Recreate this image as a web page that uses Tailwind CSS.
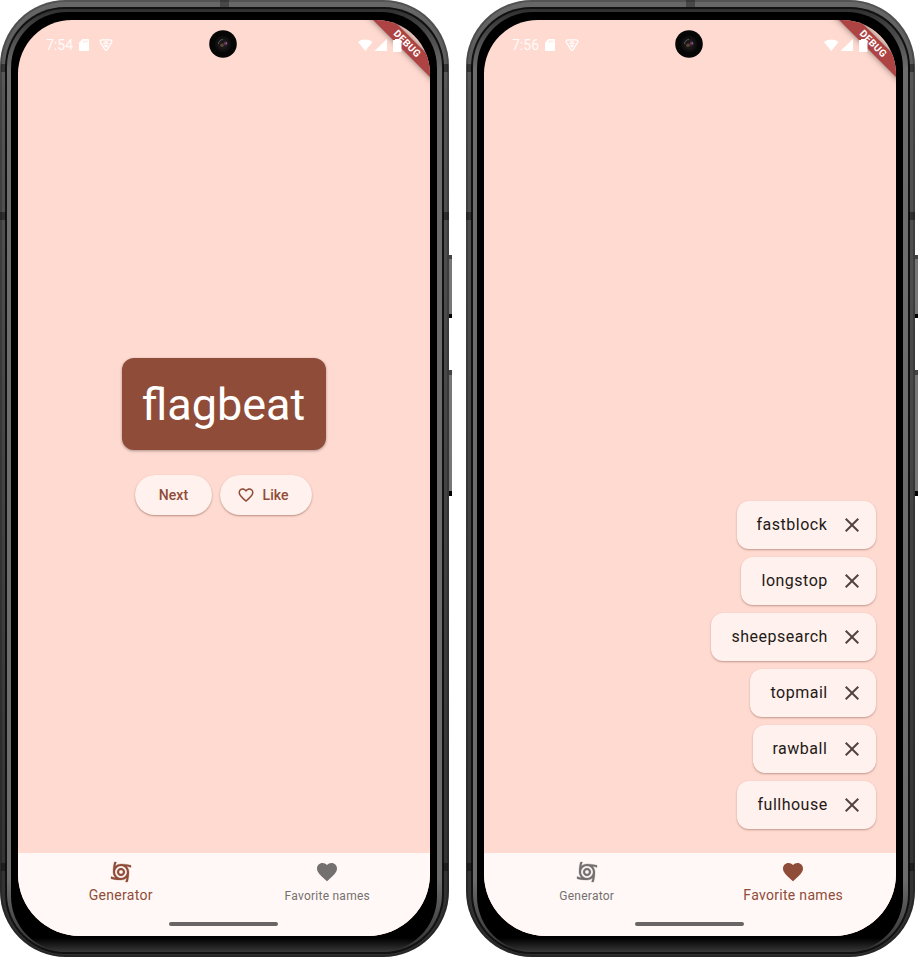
<!DOCTYPE html>
<html lang="en">
<head>
<meta charset="utf-8">
<title>Namer app</title>
<script src="https://cdn.jsdelivr.net/npm/@tailwindcss/browser@4"></script>
</head>
<body class="w-[918px] h-[957px] overflow-hidden bg-white font-['Roboto',sans-serif]">
<svg class="hidden">
  <symbol id="close" viewBox="0 0 24 24"><path fill="currentColor" d="M19 6.4 17.6 5 12 10.6 6.4 5 5 6.4 10.6 12 5 17.6 6.4 19 12 13.4 17.6 19 19 17.6 13.4 12z"/></symbol>
  <symbol id="heart" viewBox="0 0 24 24"><path fill="currentColor" d="M12 21.35l-1.45-1.32C5.4 15.36 2 12.28 2 8.5 2 5.42 4.42 3 7.5 3c1.74 0 3.41.81 4.5 2.09C13.09 3.81 14.76 3 16.5 3 19.58 3 22 5.42 22 8.5c0 3.78-3.4 6.86-8.55 11.54L12 21.35z"/></symbol>
  <symbol id="heart-o" viewBox="0 0 24 24"><path fill="currentColor" d="M16.5 3c-1.74 0-3.41.81-4.5 2.09C10.91 3.81 9.24 3 7.5 3 4.42 3 2 5.42 2 8.5c0 3.78 3.4 6.86 8.55 11.54L12 21.35l1.45-1.32C18.6 15.36 22 12.28 22 8.5 22 5.42 19.58 3 16.5 3zm-4.4 15.55l-.1.1-.1-.1C7.14 14.24 4 11.39 4 8.5 4 6.5 5.5 5 7.5 5c1.54 0 3.04.99 3.57 2.36h1.87C13.46 5.99 14.96 5 16.5 5c2 0 3.5 1.5 3.5 3.5 0 2.89-3.14 5.74-7.9 10.05z"/></symbol>
  <symbol id="cyclone" viewBox="0 0 24 24"><g fill="currentColor" stroke="currentColor" stroke-width=".3"><path d="M12 8c-2.21 0-4 1.79-4 4s1.79 4 4 4 4-1.79 4-4-1.79-4-4-4zm0 6c-1.1 0-2-.9-2-2s.9-2 2-2 2 .9 2 2-.9 2-2 2z"/><path d="M22 7.47V5.35C20.05 4.77 16.56 4 12 4c-2.15 0-4.11.86-5.54 2.24.13-.85.4-2.4 1.01-4.24H5.35C4.77 3.95 4 7.44 4 12c0 2.15.86 4.11 2.24 5.54-.85-.14-2.4-.4-4.24-1.01v2.12C3.95 19.23 7.44 20 12 20c2.15 0 4.11-.86 5.54-2.24-.14.85-.4 2.4-1.01 4.24h2.12c.58-1.95 1.35-5.44 1.35-10 0-2.15-.86-4.11-2.24-5.54.85.13 2.4.4 4.24 1.01zM12 18c-3.31 0-6-2.69-6-6s2.69-6 6-6 6 2.69 6 6-2.69 6-6 6z"/></g></symbol>
  <symbol id="sd" viewBox="0 0 10 12"><path fill="currentColor" d="M3.5 0H9a1 1 0 0 1 1 1v10a1 1 0 0 1-1 1H1a1 1 0 0 1-1-1V3.500z"/><path stroke="#ffdad1" stroke-width=".8" d="M4.400 1.500v2M6.200 1.500v2M8 1.500v2"/></symbol>
  <symbol id="shield" viewBox="0 0 14 12"><path fill="none" stroke="currentColor" stroke-width="1.300" stroke-linejoin="round" d="M3 .8h8c1.600 0 2.300 1.200 1.600 2.500L8 10.600c-.6.9-1.400.9-2 0L1.400 3.300C.7 2 1.400.8 3 .8z"/><path fill="currentColor" d="M5.600 2.300h2.800l.5 1.500H5.100zM4 4.300h6v.8H4zM5 5.800h4l-.6 1.500L7 8.800 5.600 7.300z"/></symbol>
  <symbol id="signals" viewBox="0 0 45 13"><path fill="currentColor" d="M0 3C4-.3 10.500-.3 14.500 3L7.300 12zM29 0v12H16.500zM37 1V0h4v1h1.500c.6 0 1 .4 1 1v10c0 .6-.4 1-1 1h-6.500c-.6 0-1-.4-1-1V2c0-.6.4-1 1-1z"/></symbol>
  <symbol id="camera" viewBox="0 0 28 28"><circle cx="14" cy="14" r="13.800" fill="#060606"/><circle cx="14" cy="14" r="8" fill="#101010"/><circle cx="14" cy="14" r="5.500" fill="#1c1719"/><path d="M9.500 14a4.500 4.500 0 0 1 4.500-4.500" fill="none" stroke="#5a5a5a" stroke-width="1"/><circle cx="13" cy="15.200" r="1.800" fill="#5a4632"/><circle cx="16.500" cy="13.500" r="1.900" fill="#54304e"/><circle cx="17.300" cy="13" r=".6" fill="#d59cc9"/></symbol>
</svg>

<main class="flex w-[932px] gap-[17px]">
  <!-- Generator page -->
  <section class="relative w-[449px] h-[957px] shrink-0">
    <div class="h-full rounded-[66px] bg-linear-to-b from-[#686868] via-[#545454] via-10% to-[#303030] pt-[7px] px-[5px] pb-[3px] shadow-[inset_0_0_0_2px_rgba(0,0,0,.2)]">
      <div class="h-full rounded-[60px] bg-[#111] p-[2px]">
        <div class="h-full rounded-[58px] bg-[linear-gradient(to_bottom,#303030,#6c6c6c_60px,#6c6c6c_870px,#303030)] pt-[3px] pl-[4px] pr-[5px]">
          <div class="h-full rounded-[56px] bg-[linear-gradient(to_bottom,#000_0_926px,#383838)] pt-[8px] px-[7px]">
            <div class="relative flex flex-col w-[412px] h-[916px] rounded-[54px_54px_62px_62px] overflow-hidden bg-[#ffdad1]">
              <header class="flex items-center h-[50px] pl-[28px] pr-[27px] text-white">
                <span class="text-[14px] leading-none opacity-90">7:54</span>
                <svg class="w-[10px] h-[12px] ml-[6px]"><use href="#sd"/></svg>
                <svg class="w-[14px] h-[12px] ml-[10px]"><use href="#shield"/></svg>
                <svg class="relative z-10 w-[45px] h-[13px] ml-auto"><use href="#signals"/></svg>
              </header>
              <div class="flex-1 flex flex-col items-center pt-[288px] pr-px">
                <h1 class="w-[204px] h-[92px] rounded-[12px] bg-[#8f4c38] text-white text-[45px] leading-[93px] text-center shadow-[0_1px_3px_rgba(0,0,0,.35)]">flagbeat</h1>
                <div class="flex gap-[8px] mt-[25px] text-[#8f4c38] text-[14px] font-medium tracking-[.1px]">
                  <div class="flex items-center justify-center w-[77px] h-[40px] rounded-full bg-[#fff1ed] shadow-[0_1px_2px_rgba(80,30,10,.4)]">Next</div>
                  <div class="flex items-center w-[92px] h-[40px] pl-[16.500px] gap-[8px] rounded-full bg-[#fff1ed] shadow-[0_1px_2px_rgba(80,30,10,.4)]"><svg class="w-[18px] h-[18px]"><use href="#heart-o"/></svg>Like</div>
                </div>
              </div>
              <nav class="flex h-[83px] bg-[#fff8f6]">
                <div class="flex-1 flex flex-col items-center pt-[7px] pr-px text-[#8f4c38]"><svg class="w-[24px] h-[24px]"><use href="#cyclone"/></svg><span class="mt-[1px] text-[14px] leading-[20px] tracking-[.3px]">Generator</span></div>
                <div class="flex-1 flex flex-col items-center pt-[7px] text-[#757070]"><svg class="w-[24px] h-[24px]"><use href="#heart"/></svg><span class="mt-[2px] text-[12px] leading-[20px] tracking-[.25px]">Favorite names</span></div>
              </nav>
              <div class="absolute left-[151px] bottom-[10px] w-[109px] h-[4px] rounded-full bg-[#696564]"></div>
              <div class="absolute left-[324px] top-[16.5px] w-[130px] h-[14px] rotate-45 bg-[#ae4343] text-white text-[10px] font-bold tracking-[.4px] leading-[14px] text-center shadow-[0_0_6px_rgba(0,0,0,.5)]">DEBUG</div>
            </div>
          </div>
        </div>
      </div>
    </div>
    <svg class="absolute left-[209px] top-[30px] w-[28px] h-[28px]"><use href="#camera"/></svg>
    <i class="absolute left-[449px] top-[255px] w-[3px] h-[63px] bg-[#777] border-t-4 border-t-[#444] border-b-4 border-b-black"></i>
    <i class="absolute left-[449px] top-[370px] w-[3px] h-[126px] bg-[#777] border-t-5 border-t-[#444] border-b-5 border-b-black"></i>
    <i class="absolute left-0 top-[212px] w-[6px] h-[8px] bg-black/40"></i>
    <i class="absolute right-0 top-[212px] w-[6px] h-[8px] bg-black/40"></i>
    <i class="absolute left-[1px] top-[64px] w-[5px] h-[8px] bg-black/40"></i>
    <i class="absolute right-[1px] top-[64px] w-[5px] h-[8px] bg-black/40"></i>
    <i class="absolute left-[1px] top-[863px] w-[5px] h-[8px] bg-black/40"></i>
    <i class="absolute right-[1px] top-[863px] w-[5px] h-[8px] bg-black/40"></i>
    <i class="absolute left-[220px] top-0 w-[9px] h-[7px] bg-black/30"></i>
  </section>

  <!-- Favorites page -->
  <section class="relative w-[449px] h-[957px] shrink-0">
    <div class="h-full rounded-[66px] bg-linear-to-b from-[#686868] via-[#545454] via-10% to-[#303030] pt-[7px] px-[5px] pb-[3px] shadow-[inset_0_0_0_2px_rgba(0,0,0,.2)]">
      <div class="h-full rounded-[60px] bg-[#111] p-[2px]">
        <div class="h-full rounded-[58px] bg-[linear-gradient(to_bottom,#303030,#6c6c6c_60px,#6c6c6c_870px,#303030)] pt-[3px] pl-[4px] pr-[5px]">
          <div class="h-full rounded-[56px] bg-[linear-gradient(to_bottom,#000_0_926px,#383838)] pt-[8px] px-[7px]">
            <div class="relative flex flex-col w-[412px] h-[916px] rounded-[54px_54px_62px_62px] overflow-hidden bg-[#ffdad1]">
              <header class="flex items-center h-[50px] pl-[28px] pr-[27px] text-white">
                <span class="text-[14px] leading-none opacity-90">7:56</span>
                <svg class="w-[10px] h-[12px] ml-[6px]"><use href="#sd"/></svg>
                <svg class="w-[14px] h-[12px] ml-[10px]"><use href="#shield"/></svg>
                <svg class="relative z-10 w-[45px] h-[13px] ml-auto"><use href="#signals"/></svg>
              </header>
              <div class="flex-1 flex flex-col items-end justify-end gap-[8px] pr-[20.5px] pb-[24px] text-[16px] tracking-[.5px] text-[#231917]">
                <div class="flex items-center justify-between w-[139px] h-[48px] pl-[20px] pr-[12px] rounded-[12px] bg-[#fff1ed] shadow-[0_1px_2px_rgba(80,30,10,.35)]">fastblock<svg class="w-[24px] h-[24px] text-[#53433f]"><use href="#close"/></svg></div>
                <div class="flex items-center justify-between w-[134.500px] h-[48px] pl-[20.500px] pr-[12px] rounded-[12px] bg-[#fff1ed] shadow-[0_1px_2px_rgba(80,30,10,.35)]">longstop<svg class="w-[24px] h-[24px] text-[#53433f]"><use href="#close"/></svg></div>
                <div class="flex items-center justify-between w-[164.500px] h-[48px] pl-[20.500px] pr-[12px] rounded-[12px] bg-[#fff1ed] shadow-[0_1px_2px_rgba(80,30,10,.35)]">sheepsearch<svg class="w-[24px] h-[24px] text-[#53433f]"><use href="#close"/></svg></div>
                <div class="flex items-center justify-between w-[125.500px] h-[48px] pl-[20.500px] pr-[12px] rounded-[12px] bg-[#fff1ed] shadow-[0_1px_2px_rgba(80,30,10,.35)]">topmail<svg class="w-[24px] h-[24px] text-[#53433f]"><use href="#close"/></svg></div>
                <div class="flex items-center justify-between w-[123px] h-[48px] pl-[20px] pr-[12px] rounded-[12px] bg-[#fff1ed] shadow-[0_1px_2px_rgba(80,30,10,.35)]">rawball<svg class="w-[24px] h-[24px] text-[#53433f]"><use href="#close"/></svg></div>
                <div class="flex items-center justify-between w-[138.500px] h-[48px] pl-[20.500px] pr-[12px] rounded-[12px] bg-[#fff1ed] shadow-[0_1px_2px_rgba(80,30,10,.35)]">fullhouse<svg class="w-[24px] h-[24px] text-[#53433f]"><use href="#close"/></svg></div>
              </div>
              <nav class="flex h-[83px] bg-[#fff8f6]">
                <div class="flex-1 flex flex-col items-center pt-[7px] pr-px text-[#757070]"><svg class="w-[24px] h-[24px]"><use href="#cyclone"/></svg><span class="mt-[2px] text-[12px] leading-[20px] tracking-[.25px]">Generator</span></div>
                <div class="flex-1 flex flex-col items-center pt-[7px] text-[#8f4c38]"><svg class="w-[24px] h-[24px]"><use href="#heart"/></svg><span class="mt-[1px] text-[14px] leading-[20px] tracking-[.3px]">Favorite names</span></div>
              </nav>
              <div class="absolute left-[151px] bottom-[10px] w-[109px] h-[4px] rounded-full bg-[#696564]"></div>
              <div class="absolute left-[324px] top-[16.5px] w-[130px] h-[14px] rotate-45 bg-[#ae4343] text-white text-[10px] font-bold tracking-[.4px] leading-[14px] text-center shadow-[0_0_6px_rgba(0,0,0,.5)]">DEBUG</div>
            </div>
          </div>
        </div>
      </div>
    </div>
    <svg class="absolute left-[209px] top-[30px] w-[28px] h-[28px]"><use href="#camera"/></svg>
    <i class="absolute left-[449px] top-[255px] w-[3px] h-[63px] bg-[#777] border-t-4 border-t-[#444] border-b-4 border-b-black"></i>
    <i class="absolute left-[449px] top-[370px] w-[3px] h-[126px] bg-[#777] border-t-5 border-t-[#444] border-b-5 border-b-black"></i>
    <i class="absolute left-0 top-[212px] w-[6px] h-[8px] bg-black/40"></i>
    <i class="absolute right-0 top-[212px] w-[6px] h-[8px] bg-black/40"></i>
    <i class="absolute left-[1px] top-[64px] w-[5px] h-[8px] bg-black/40"></i>
    <i class="absolute right-[1px] top-[64px] w-[5px] h-[8px] bg-black/40"></i>
    <i class="absolute left-[1px] top-[863px] w-[5px] h-[8px] bg-black/40"></i>
    <i class="absolute right-[1px] top-[863px] w-[5px] h-[8px] bg-black/40"></i>
    <i class="absolute left-[220px] top-0 w-[9px] h-[7px] bg-black/30"></i>
  </section>
</main>
</body>
</html>
